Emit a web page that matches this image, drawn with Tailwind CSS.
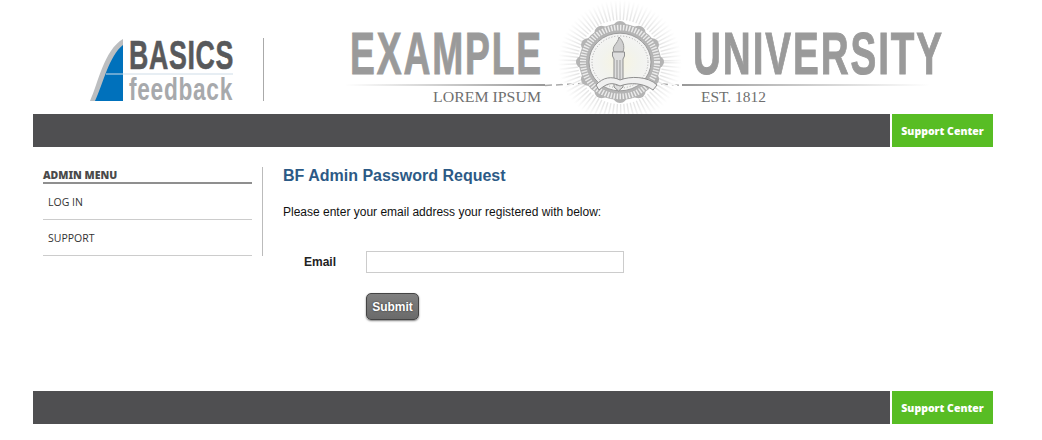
<!DOCTYPE html>
<html lang="en">

<head>
    <meta charset="UTF-8">
    <meta name="viewport" content="width=device-width, initial-scale=1.0">
    <title>BF Admin Password Request</title>
    <script src="https://cdn.jsdelivr.net/npm/@tailwindcss/browser@4"></script>
</head>

<body class="bg-white font-['Liberation_Sans',Arial,sans-serif] text-[#222]">
    <div class="w-[960px] ml-[33px]">
        <!-- logos -->
        <header class="flex h-[114px]">
            <svg class="w-[210px] h-[114px] shrink-0 overflow-visible" viewBox="33 0 210 114">
                <path d="M90 101 C98 84 104 50 123 39 L123 101 Z" fill="#bcbec0" />
                <path d="M95 101 C103 84 109 56 123 45 L123 101 Z" fill="#0071bc" />
                <path d="M106 74 H233" stroke="#cfdde8" stroke-width="1" />
                <text x="129" y="69" font-family="Liberation Sans" font-weight="700" font-size="41" letter-spacing="1" stroke="#58595b" stroke-width="0.6" fill="#58595b" textLength="105" lengthAdjust="spacingAndGlyphs">BASICS</text>
                <text x="129" y="100" font-family="Liberation Sans" font-size="32" letter-spacing="1" fill="#a7a9ac" font-weight="700" textLength="104" lengthAdjust="spacingAndGlyphs">feedback</text>
            </svg>
            <div class="w-px h-[63px] mt-[38px] ml-[20px] bg-[#aaa]"></div>
            <svg class="w-[640px] h-[114px] ml-[66px] shrink-0 overflow-visible" viewBox="330 0 640 114">
                <defs>
                    <linearGradient id="ruleL" x1="0" x2="1" y1="0" y2="0">
                        <stop offset="0" stop-color="#fff" />
                        <stop offset="1" stop-color="#999" />
                    </linearGradient>
                    <linearGradient id="ruleR" x1="0" x2="1" y1="0" y2="0">
                        <stop offset="0" stop-color="#999" />
                        <stop offset="1" stop-color="#fff" />
                    </linearGradient>
                    <radialGradient id="rays" gradientUnits="userSpaceOnUse" cx="620" cy="62" r="62">
                        <stop offset="0.7" stop-color="#e4e4e4" />
                        <stop offset="1" stop-color="#fff" />
                    </radialGradient>
                    <radialGradient id="glow" cx="0.5" cy="0.5" r="0.5">
                        <stop offset="0" stop-color="#f7f4e0" />
                        <stop offset="0.6" stop-color="#f2f3ee" />
                        <stop offset="1" stop-color="#f4f4f4" />
                    </radialGradient>
                </defs>
                <text x="350" y="74" font-family="Liberation Sans" font-weight="700" font-size="60" letter-spacing="3" stroke="#9a9a9a" stroke-width="1" fill="#9a9a9a" textLength="193" lengthAdjust="spacingAndGlyphs">EXAMPLE</text>
                <text x="693" y="74" font-family="Liberation Sans" font-weight="700" font-size="60" letter-spacing="3" stroke="#9a9a9a" stroke-width="1" fill="#9a9a9a" textLength="251" lengthAdjust="spacingAndGlyphs">UNIVERSITY</text>
                <rect x="345" y="84" width="200" height="2" fill="url(#ruleL)" />
                <path d="M545 85.500 L590 83" stroke="#aaa" stroke-width="1.500" stroke-dasharray="7 4" />
                <path d="M650 83 L682 85.500" stroke="#aaa" stroke-width="1.500" stroke-dasharray="7 4" />
                <rect x="682" y="84" width="248" height="2" fill="url(#ruleR)" />
                <text x="433" y="102" font-family="Liberation Serif" font-size="15.500" fill="#6f6f6f" textLength="108" lengthAdjust="spacingAndGlyphs">LOREM IPSUM</text>
                <text x="701" y="102" font-family="Liberation Serif" font-size="15.500" fill="#6f6f6f" textLength="65" lengthAdjust="spacingAndGlyphs">EST. 1812</text>

                <!-- seal -->
                <circle cx="620" cy="62" r="52" fill="none" stroke="url(#rays)" stroke-width="20" stroke-dasharray="1.600 2.400" />
                <g transform="translate(620 62) scale(1 .93) translate(-620 -62)">
                    <g fill="#b4b4b4">
                        <circle cx="620" cy="62" r="41" />
                        <circle cx="620" cy="25" r="7" />
                        <circle cx="638.500" cy="30" r="7" />
                        <circle cx="652" cy="43.500" r="7" />
                        <circle cx="657" cy="62" r="7" />
                        <circle cx="652" cy="80.500" r="7" />
                        <circle cx="638.500" cy="94" r="7" />
                        <circle cx="620" cy="99" r="7" />
                        <circle cx="601.500" cy="94" r="7" />
                        <circle cx="588" cy="80.500" r="7" />
                        <circle cx="583" cy="62" r="7" />
                        <circle cx="588" cy="43.500" r="7" />
                        <circle cx="601.500" cy="30" r="7" />
                    </g>
                    <circle cx="620" cy="62" r="37" fill="none" stroke="#ececec" stroke-width="6" stroke-dasharray="1.500 1.500" />
                    <circle cx="620" cy="62" r="31" fill="url(#glow)" stroke="#999" stroke-width="1" />
                    <circle cx="620" cy="62" r="28" fill="none" stroke="#a5a5a5" stroke-width="1" stroke-dasharray="1 2" />
                </g>
                <path d="M619 37 C623 41 625 46 623 52 L614 52 C611 46 618 44 619 37 Z" fill="#cfcfcf" stroke="#999" stroke-width="1" />
                <path d="M612.500 52 H624.500 V56 L623 59 V87 L618.500 91 L614 87 V59 L612.500 56 Z" fill="#dedede" stroke="#8f8f8f" stroke-width="1" />
                <path d="M617 60 V86 M620 60 V86" stroke="#999" stroke-width="1" />
                <path d="M596 85 C603 77 612 76 620 80 C630 76 648 76 657 85 L653 90 C644 83 630 82 620 86 C612 82 607 83 599 90 Z" fill="#f0f0f0" stroke="#8f8f8f" stroke-width="1" />
            </svg>
        </header>

        <!-- top bar -->
        <div class="flex h-[33px] gap-[2px]">
            <div class="w-[857px] bg-[#4f4f51]"></div>
            <a href="#" class="w-[101px] pt-[2px] bg-[#58bd24] flex items-center justify-center text-white text-[10.5px] font-black font-['Noto_Sans',sans-serif]">Support Center</a>
        </div>

        <main class="flex h-[244px] pt-[20px]">
            <!-- sidebar -->
            <aside class="w-[220px] h-[89px] ml-[10px] pr-[10px] border-r border-[#bbb] shrink-0">
                <h2 class="h-[17px] border-b-2 border-[#8f8f8f] text-[10.5px] leading-[17px] font-black text-[#4a4a4a] font-['Noto_Sans',sans-serif]">ADMIN MENU</h2>
                <ul class="text-[10.5px] text-[#333] font-['Open_Sans',sans-serif]">
                    <li class="h-[36px] pl-[5px] pt-[8px] leading-[20px] border-b border-[#ccc]">LOG IN</li>
                    <li class="h-[36px] pl-[5px] pt-[8px] leading-[20px] border-b border-[#ccc]">SUPPORT</li>
                </ul>
            </aside>
            <!-- form -->
            <section class="pl-[20px]">
                <h1 class="text-[16px] leading-[18px] font-bold text-[#2c5a86]">BF Admin Password Request</h1>
                <p class="mt-[20px] text-[12px] leading-[14px] text-[#111]">Please enter your email address your registered with below:</p>
                <form class="mt-[32px]">
                    <div class="flex items-center h-[22px]">
                        <label for="email" class="w-[83px] pl-[21px] text-[12px] font-bold text-[#222]">Email</label>
                        <input id="email" type="text" class="w-[258px] h-[22px] border border-[#ccc] bg-white">
                    </div>
                    <button type="button" class="block mt-[20px] ml-[83px] w-[53px] h-[27px] rounded-[5px] border border-[#444] bg-gradient-to-b from-[#808080] to-[#6a6a6a] text-white text-[12px] font-bold shadow-[0_1px_2px_rgba(0,0,0,0.5)] [text-shadow:0_0_2px_rgba(0,0,0,0.6)]">Submit</button>
                </form>
            </section>
        </main>

        <!-- bottom bar -->
        <footer class="flex h-[33px] gap-[2px]">
            <div class="w-[857px] bg-[#4f4f51]"></div>
            <a href="#" class="w-[101px] pt-[2px] bg-[#58bd24] flex items-center justify-center text-white text-[10.5px] font-black font-['Noto_Sans',sans-serif]">Support Center</a>
        </footer>
    </div>
</body>

</html>
